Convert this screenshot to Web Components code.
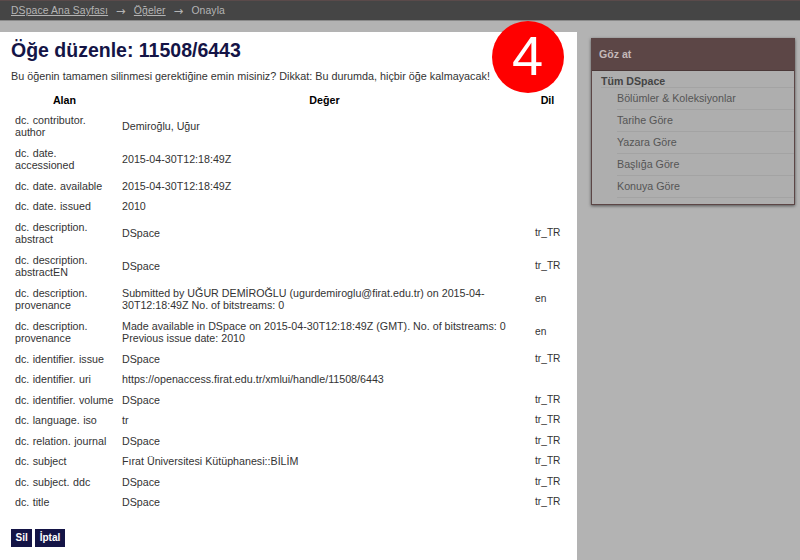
<!DOCTYPE html>
<html lang="tr">
<head>
<meta charset="utf-8">
<title>Öğe düzenle</title>
<style>
  html, body { margin: 0; height: 100%; overflow: hidden; background: #b3b3b3; }
  body { font: 10.8px/12.5px "Liberation Sans", Arial, sans-serif; color: #333; }
</style>
</head>
<body>
<ds-shell>
  <ds-trail slot="trail">
    <a href="#">DSpace Ana Sayfası</a>
    <a href="#">Öğeler</a>
    <span>Onayla</span>
  </ds-trail>
  <ds-panel slot="main">
    <h1 slot="title">Öğe düzenle: 11508/6443</h1>
    <span slot="intro">Bu öğenin tamamen silinmesi gerektiğine emin misiniz? Dikkat: Bu durumda, hiçbir öğe kalmayacak!</span>
    <meta-row head field="Alan" lang-code="Dil">Değer</meta-row>
    <meta-row field="dc. contributor. author">Demiroğlu, Uğur</meta-row>
    <meta-row field="dc. date. accessioned">2015-04-30T12:18:49Z</meta-row>
    <meta-row field="dc. date. available">2015-04-30T12:18:49Z</meta-row>
    <meta-row field="dc. date. issued">2010</meta-row>
    <meta-row field="dc. description. abstract" lang-code="tr_TR">DSpace</meta-row>
    <meta-row field="dc. description. abstractEN" lang-code="tr_TR">DSpace</meta-row>
    <meta-row field="dc. description. provenance" lang-code="en">Submitted by UĞUR DEMİROĞLU (ugurdemiroglu@firat.edu.tr) on 2015-04-30T12:18:49Z No. of bitstreams: 0</meta-row>
    <meta-row field="dc. description. provenance" lang-code="en">Made available in DSpace on 2015-04-30T12:18:49Z (GMT). No. of bitstreams: 0<br>Previous issue date: 2010</meta-row>
    <meta-row field="dc. identifier. issue" lang-code="tr_TR">DSpace</meta-row>
    <meta-row field="dc. identifier. uri">https://openaccess.firat.edu.tr/xmlui/handle/11508/6443</meta-row>
    <meta-row field="dc. identifier. volume" lang-code="tr_TR">DSpace</meta-row>
    <meta-row field="dc. language. iso" lang-code="tr_TR">tr</meta-row>
    <meta-row field="dc. relation. journal" lang-code="tr_TR">DSpace</meta-row>
    <meta-row field="dc. subject" lang-code="tr_TR">Fırat Üniversitesi Kütüphanesi::BİLİM</meta-row>
    <meta-row field="dc. subject. ddc" lang-code="tr_TR">DSpace</meta-row>
    <meta-row field="dc. title" lang-code="tr_TR">DSpace</meta-row>
    <ds-btn slot="actions">Sil</ds-btn>
    <ds-btn slot="actions">İptal</ds-btn>
  </ds-panel>
  <ds-browse slot="side" heading="Göz at" scope="Tüm DSpace">
    <a href="#">Bölümler &amp; Koleksiyonlar</a>
    <a href="#">Tarihe Göre</a>
    <a href="#">Yazara Göre</a>
    <a href="#">Başlığa Göre</a>
    <a href="#">Konuya Göre</a>
  </ds-browse>
  <ds-badge slot="badge">4</ds-badge>
</ds-shell>

<script>
// small helper: every element here is just a shadow root with fixed markup
function shadow(el, html) {
  el.attachShadow({ mode: "open" }).innerHTML = html;
  return el.shadowRoot;
}

class DsShell extends HTMLElement {
  constructor() {
    super();
    shadow(this, `
      <style>
        :host { display: block; position: relative; height: 560px; overflow: hidden; }
        .cols { display: flex; align-items: flex-start; padding-top: 11px; }
        .main { width: 577px; flex: none; }
        .side { width: 204px; flex: none; margin: 6px 0 0 14px; }
      </style>
      <slot name="trail"></slot>
      <div class="cols">
        <div class="main"><slot name="main"></slot></div>
        <div class="side"><slot name="side"></slot></div>
      </div>
      <slot name="badge"></slot>`);
  }
}

class DsTrail extends HTMLElement {
  constructor() {
    super();
    shadow(this, `
      <style>
        :host {
          display: flex; align-items: center; height: 21px; box-sizing: border-box;
          padding: 2px 0 0 11px; background: #454545;
          border-top: 1px solid #5a4a4a; border-bottom: 1px solid #8a8a8a;
          color: #b4b4b4; font-size: 10.4px; letter-spacing: .1px;
        }
        ::slotted(a) { color: #b4b4b4; text-decoration: underline; }
      </style>
      <slot></slot>`);
  }
  connectedCallback() {
    // arrows go between the crumbs
    [...this.children].slice(1).forEach((c) => {
      const s = document.createElement("span");
      s.textContent = "→";
      s.style.cssText = "margin:0 8px;font-family:'DejaVu Sans',sans-serif;font-size:11.5px;text-decoration:none";
      this.insertBefore(s, c);
    });
  }
}

class DsPanel extends HTMLElement {
  constructor() {
    super();
    shadow(this, `
      <style>
        :host { display: block; background: #fff; height: 528px; box-sizing: border-box; padding: 7px 0 0 11px; }
        ::slotted(h1) { margin: 0; font: bold 19.5px/22px "Liberation Sans", Arial, sans-serif; color: #141446; }
        .intro { margin-top: 9px; line-height: 13px; }
        .rows { margin-top: 7px; width: 557px; }
        .actions { display: flex; gap: 3px; margin-top: 16px; }
      </style>
      <slot name="title"></slot>
      <div class="intro"><slot name="intro"></slot></div>
      <div class="rows"><slot></slot></div>
      <div class="actions"><slot name="actions"></slot></div>`);
  }
}

class MetaRow extends HTMLElement {
  constructor() {
    super();
    shadow(this, `
      <style>
        :host { display: grid; grid-template-columns: 107px 413px 37px; align-items: center; font-size: 10.7px; }
        .c { padding: 4px 0 4px 4px; box-sizing: border-box; }
        .f { padding-right: 1px; word-spacing: .5px; }
        .v { padding-right: 10px; }
        .l { font-size: 10.2px; }
        :host([head]) { font-weight: bold; color: #000; text-align: center; }
        :host([head]) .c { padding: 4px 0 3px; }
        :host([head]) .l { padding-right: 4px; font-size: 10.7px; }
      </style>
      <div class="c f"></div>
      <div class="c v"><slot></slot></div>
      <div class="c l"></div>`);
    this.shadowRoot.querySelector(".f").textContent = this.getAttribute("field");
    this.shadowRoot.querySelector(".l").textContent = this.getAttribute("lang-code") || "";
  }
}

class DsBtn extends HTMLElement {
  constructor() {
    super();
    shadow(this, `
      <style>
        :host {
          display: block; height: 18px; padding: 0 4.5px; box-sizing: border-box;
          background: #141446; color: #fff; font-weight: bold; font-size: 10px; line-height: 18px;
        }
      </style>
      <slot></slot>`);
  }
}

class DsBrowse extends HTMLElement {
  constructor() {
    super();
    shadow(this, `
      <style>
        :host {
          display: block; background: #aeaeae; box-sizing: border-box; height: 167px;
          border: 1px solid #5c4646; border-top: 0;
          box-shadow: 0 1px 3px rgba(0,0,0,.55);
          color: #555;
        }
        .head {
          height: 32px; background: #5c4646; color: #c4b9b9; font-weight: bold;
          display: flex; align-items: center; padding-left: 7px; font-size: 10.6px;
          border-bottom: 1px solid #4a3838;
        }
        .scope {
          margin: 4px 0 0 9px; font-weight: bold; line-height: 12px; color: #444;
          font-size: 10.6px; border-bottom: 1px solid #a3a3a3;
        }
        .list { margin: 0 0 0 25px; }
        ::slotted(a) {
          display: block; height: 22.1px; line-height: 21px; box-sizing: border-box;
          color: #555; text-decoration: none; font-size: 10.7px;
          border-bottom: 1px solid #a3a3a3;
        }
      </style>
      <div class="head"></div>
      <div class="scope"></div>
      <div class="list"><slot></slot></div>`);
    this.shadowRoot.querySelector(".head").textContent = this.getAttribute("heading");
    this.shadowRoot.querySelector(".scope").textContent = this.getAttribute("scope");
  }
}

class DsBadge extends HTMLElement {
  constructor() {
    super();
    shadow(this, `
      <style>
        :host {
          position: absolute; left: 492px; top: 21px; width: 72px; height: 72px;
          border-radius: 50%; background: #ff0000; color: #fff;
          display: flex; align-items: center; justify-content: center;
          box-sizing: border-box; padding: 0 1px 2px 0;
          font: 56px/1 "Liberation Sans", Arial, sans-serif;
        }
      </style>
      <slot></slot>`);
  }
}

customElements.define("ds-shell", DsShell);
customElements.define("ds-trail", DsTrail);
customElements.define("ds-panel", DsPanel);
customElements.define("meta-row", MetaRow);
customElements.define("ds-btn", DsBtn);
customElements.define("ds-browse", DsBrowse);
customElements.define("ds-badge", DsBadge);
</script>
</body>
</html>
